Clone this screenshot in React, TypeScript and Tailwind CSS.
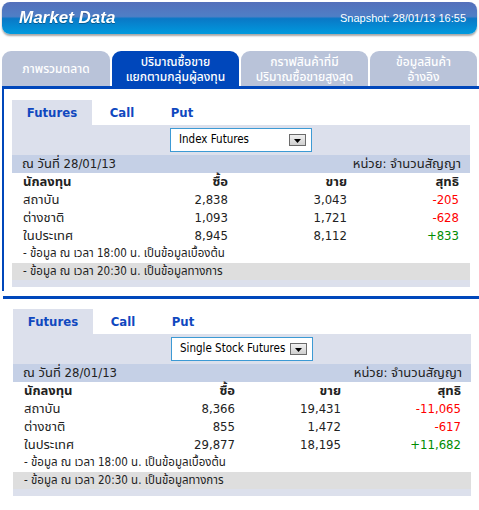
const font = 'font-["Tahoma","DejaVu_Sans_Condensed","Noto_Sans_Thai","Loma","Garuda",sans-serif]'

type Row = { name: string; buy: string; sell: string; net: string }

const tabs = [
  { label: ['ภาพรวมตลาด'], w: 'w-[108px]', active: false },
  { label: ['ปริมาณซื้อขาย', 'แยกตามกลุ่มผู้ลงทุน'], w: 'w-[127px]', active: true },
  { label: ['กราฟสินค้าที่มี', 'ปริมาณซื้อขายสูงสุด'], w: 'w-[127px]', active: false },
  { label: ['ข้อมูลสินค้า', 'อ้างอิง'], w: 'w-[107px]', active: false },
]

function Net({ v }: { v: string }) {
  return <span className={v.startsWith('-') ? 'text-[#ff0000]' : 'text-[#008c00]'}>{v}</span>
}

function Block({
  product,
  rows,
  cols,
}: {
  product: string
  rows: Row[]
  cols: [string, string, string, string]
}) {
  return (
    <div className="bg-[#dce0ec] text-[13px] text-[#222]">
      <div className="flex h-[25px] bg-white font-bold text-[13px] text-[#1048bf]">
        <div className="w-[80px] bg-[#dce0ec] flex items-center justify-center">Futures</div>
        <div className="w-[60px] flex items-center justify-center">Call</div>
        <div className="w-[60px] flex items-center justify-center">Put</div>
      </div>
      <div className="h-[30px] flex items-center justify-center">
        <div className="w-[142px] h-[24px] bg-white border border-[#3d9ad4] flex items-center justify-between pl-[8px] pr-[5px] text-[11.5px] text-black">
          <span>{product}</span>
          <span className="w-[17px] h-[12px] border border-[#6b6b6b] bg-gradient-to-b from-[#f0f0f0] to-[#cfcfcf] flex items-end justify-center pb-[2px]">
            <svg width="7" height="4" viewBox="0 0 7 4">
              <path d="M0 0H7L3.5 4Z" fill="#000" />
            </svg>
          </span>
        </div>
      </div>
      <div className="h-[18px] bg-[#c5d0e6] flex items-center justify-between pl-[10px] pr-[9px]">
        <span>ณ วันที่ 28/01/13</span>
        <span>หน่วย: จำนวนสัญญา</span>
      </div>
      <div className="bg-white">
        <div className="h-[18px] flex items-center pl-[11px] font-bold">
          <span className={cols[0]}>นักลงทุน</span>
          <span className={`${cols[1]} text-right`}>ซื้อ</span>
          <span className={`${cols[2]} text-right`}>ขาย</span>
          <span className={`${cols[3]} text-right`}>สุทธิ</span>
        </div>
        {rows.map((r) => (
          <div key={r.name} className="h-[18px] flex items-center pl-[11px]">
            <span className={cols[0]}>{r.name}</span>
            <span className={`${cols[1]} text-right`}>{r.buy}</span>
            <span className={`${cols[2]} text-right`}>{r.sell}</span>
            <span className={`${cols[3]} text-right`}>
              <Net v={r.net} />
            </span>
          </div>
        ))}
        <div className="h-[18px] flex items-center pl-[11px] text-[11.5px]">
          - ข้อมูล ณ เวลา 18:00 น. เป็นข้อมูลเบื้องต้น
        </div>
      </div>
      <div className="h-[17px] bg-[#dedede] flex items-center pl-[11px] text-[11.5px]">
        - ข้อมูล ณ เวลา 20:30 น. เป็นข้อมูลทางการ
      </div>
      <div className="h-[7px]" />
    </div>
  )
}

export default function App() {
  return (
    <div className={`w-[479px] h-[510px] bg-white overflow-hidden ${font}`}>
      <div className="pt-[2px] pl-[2px]">
        <div className="w-[475px] h-[32px] rounded-[8px] shadow-[0_2px_2px_rgba(0,0,0,0.35)] bg-[linear-gradient(to_bottom,#5470bb_0%,#4f7fc6_45%,#0a78c6_52%,#009ade_100%)] flex items-center justify-between pl-[17px] pr-[11px] text-white">
          <span className='font-["Liberation_Sans",Arial,sans-serif] font-bold italic text-[17px] drop-shadow-[0_1px_0_rgba(0,0,0,0.3)]'>
            Market Data
          </span>
          <span className='font-["Liberation_Sans",Arial,sans-serif] text-[11px]'>Snapshot: 28/01/13 16:55</span>
        </div>
      </div>

      <div className="mt-[17px] flex gap-[2px] pl-[2px] h-[35px]">
        {tabs.map((t) => (
          <div
            key={t.label[0]}
            className={`${t.w} rounded-t-[9px] flex flex-col items-center justify-center pt-[2px] text-[12px] leading-[15px] text-white font-medium ${
              t.active ? 'bg-[#0047bb]' : 'bg-[#b9c3d9]'
            }`}
          >
            {t.label.map((l) => (
              <span key={l}>{l}</span>
            ))}
          </div>
        ))}
      </div>

      <div className="ml-[2px] border-t-[3px] border-l-[2px] border-[#0047bb] pt-[11px] pb-[4px] pl-[8px] pr-[9px]">
        <Block
          product="Index Futures"
          cols={['w-[120px]', 'w-[85px]', 'w-[119px]', 'w-[112px]']}
          rows={[
            { name: 'สถาบัน', buy: '2,838', sell: '3,043', net: '-205' },
            { name: 'ต่างชาติ', buy: '1,093', sell: '1,721', net: '-628' },
            { name: 'ในประเทศ', buy: '8,945', sell: '8,112', net: '+833' },
          ]}
        />
      </div>

      <div className="mt-[5px] ml-[3px] border-t-[3px] border-[#0047bb] pt-[10px] pl-[10px] pr-[8px]">
        <Block
          product="Single Stock Futures"
          cols={['w-[120px]', 'w-[91px]', 'w-[106px]', 'w-[120px]']}
          rows={[
            { name: 'สถาบัน', buy: '8,366', sell: '19,431', net: '-11,065' },
            { name: 'ต่างชาติ', buy: '855', sell: '1,472', net: '-617' },
            { name: 'ในประเทศ', buy: '29,877', sell: '18,195', net: '+11,682' },
          ]}
        />
      </div>
    </div>
  )
}
